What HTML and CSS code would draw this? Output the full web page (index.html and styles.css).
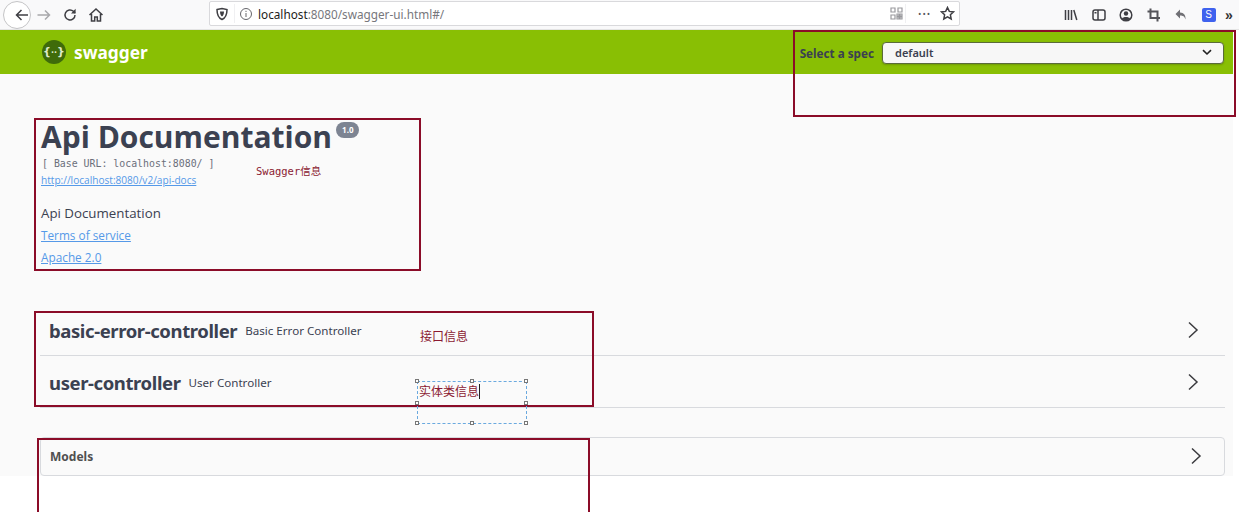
FILE: index.html
```html
<!DOCTYPE html>
<html lang="en">
<head>
<meta charset="utf-8">
<title>Swagger UI</title>
<link rel="stylesheet" href="styles.css">
</head>
<body>
<div class="page">
  <header class="browser">
    <div class="nav">
      <span class="back"><svg width="18" height="18" viewBox="0 0 18 18"><path d="M15 9H3.500M8.500 4 3.500 9l5 5" class="ic"/></svg></span>
      <svg class="fwd" width="16" height="16" viewBox="0 0 16 16"><path d="M1.500 8h12M9 3.500 13.500 8 9 12.500" class="ic-dim"/></svg>
      <svg width="16" height="16" viewBox="0 0 16 16"><path d="M13 8a5 5 0 1 1-1.600-3.700L13 6" class="ic"/><path d="M13.600 1.800v4.600H9z" class="ic-fill"/></svg>
      <svg width="16" height="16" viewBox="0 0 16 16"><path d="M1.500 8 8 2l6.500 6M3.500 7v7h3.200v-4h2.600v4h3.200V7" class="ic"/></svg>
    </div>
    <div class="urlbar">
      <svg width="14" height="14" viewBox="0 0 14 14"><path d="M2 2.500 7 1.500l5 1c0 5-1.500 8.500-5 10-3.500-1.500-5-5-5-10z" class="ic"/><path d="M5 4.500h4c0 2.500-.7 4-2 5-1.300-1-2-2.500-2-5z" class="ic-fill"/></svg>
      <span class="sep"></span>
      <svg width="14" height="14" viewBox="0 0 14 14"><circle cx="7" cy="7" r="5.500" class="ic-thin"/><path d="M7 6v4M7 3.800v1.200" class="ic-thin"/></svg>
      <span class="url"><b>localhost</b>:8080/swagger-ui.html#/</span>
      <span class="grow"></span>
      <svg class="qr" width="13" height="13" viewBox="0 0 13 13"><path d="M1 1h4v4H1zM8 1h4v4H8zM1 8h4v4H1zM7 7h2v2H7zM10 7h2v2h-2zM7 10h2v2H7zM10 10h2v2h-2z" class="ic-qr"/></svg>
      <span class="sep tall"></span>
      <span class="dots">•••</span>
      <svg width="15" height="15" viewBox="0 0 15 15"><path d="M7.500 1.500 9.300 5.400l4.200.5-3.100 2.900.8 4.200-3.700-2.100L3.800 13l.8-4.200L1.500 5.900l4.200-.5z" class="ic"/></svg>
    </div>
    <div class="tools">
      <svg width="14" height="14" viewBox="0 0 14 14"><path d="M1.500 2v10M4.500 2v10M7.500 2v10M9.800 2l3 10" class="ic"/></svg>
      <svg width="14" height="14" viewBox="0 0 14 14"><rect x="1" y="2" width="12" height="10" rx="2" class="ic"/><path d="M6 2v10" class="ic"/><path d="M2.500 4h2v1.500h-2z" class="ic-fill"/></svg>
      <svg width="14" height="14" viewBox="0 0 14 14"><circle cx="7" cy="7" r="5.800" class="ic"/><circle cx="7" cy="5.500" r="2.200" class="ic-fill"/><path d="M3 10.500c1-2 7-2 8 0-1 2-7 2-8 0z" class="ic-fill"/></svg>
      <svg width="14" height="14" viewBox="0 0 14 14"><path d="M3.500 0.500v9.500h9.500M0.500 3.500h10v10" class="ic-crop"/></svg>
      <svg width="14" height="14" viewBox="0 0 14 14"><path d="M6 1.500 1.500 6 6 10.500V7.500c3 0 4.500.8 5.500 4 .4-4-1.500-7-5.500-7z" class="ic-back"/></svg>
      <span class="s-badge">S</span>
      <span class="more">»</span>
    </div>
  </header>

  <main class="swagger">
    <div class="topbar">
      <div class="logo">
        <span class="logo-mark">{<i>··</i>}</span>
        <span class="logo-text">swagger</span>
      </div>
      <div class="spec">
        <label class="spec-label">Select a spec</label>
        <div class="spec-select">
          <span>default</span>
          <svg width="10" height="7" viewBox="0 0 10 7"><path d="M1 1.200 5 5l4-3.800" class="ic-sel"/></svg>
        </div>
      </div>
    </div>

    <section class="info">
      <h1 class="title">Api Documentation<span class="version">1.0</span></h1>
      <div class="base">[ Base URL: localhost:8080/ ]</div>
      <a class="docs" href="#">http://localhost:8080/v2/api-docs</a>
      <p class="desc">Api Documentation</p>
      <a class="link" href="#">Terms of service</a>
      <a class="link" href="#">Apache 2.0</a>
    </section>

    <section class="tags">
      <div class="tag">
        <h4 class="tag-name">basic-error-controller</h4>
        <span class="tag-desc">Basic Error Controller</span>
        <svg class="chev" width="12" height="18" viewBox="0 0 12 18"><path d="M2 1.500 10 9l-8 7.500" class="ic-chev"/></svg>
      </div>
      <div class="tag">
        <h4 class="tag-name">user-controller</h4>
        <span class="tag-desc">User Controller</span>
        <svg class="chev" width="12" height="18" viewBox="0 0 12 18"><path d="M2 1.500 10 9l-8 7.500" class="ic-chev"/></svg>
      </div>
    </section>

    <section class="models">
      <h4 class="models-title">Models</h4>
      <svg class="chev" width="12" height="18" viewBox="0 0 12 18"><path d="M2 1.500 10 9l-8 7.500" class="ic-chev"/></svg>
    </section>
  </main>

  <div class="mark box-spec"></div>
  <div class="mark box-info"></div>
  <div class="mark box-tags"></div>
  <div class="mark box-models"></div>
  <span class="note note-swagger">Swagger信息</span>
  <span class="note note-api">接口信息</span>
  <div class="textbox">
    <span class="note-inner">实体类信息</span><span class="caret"></span>
    <i class="h h1"></i><i class="h h2"></i><i class="h h3"></i><i class="h h4"></i><i class="h h5"></i><i class="h h6"></i><i class="h h7"></i><i class="h h8"></i>
  </div>
</div>
</body>
</html>
```

FILE: styles.css
```css
* { box-sizing: border-box; }
html, body { margin: 0; padding: 0; background: #fff; }
.page { position: relative; width: 1239px; height: 512px; overflow: hidden; font-family: "Open Sans", sans-serif; color: #3b4151; }

svg { display: block; flex: none; }
.ic { fill: none; stroke: #3f3f44; stroke-width: 1.500; }
.ic-dim { fill: none; stroke: #a8a8ab; stroke-width: 1.500; }
.ic-thin { fill: none; stroke: #66666b; stroke-width: 1; }
.ic-fill { fill: #3f3f44; }
.ic-qr { fill: none; stroke: #9a9a9e; stroke-width: 1.200; }
.ic-crop { fill: none; stroke: #55555a; stroke-width: 2; }
.ic-back { fill: #707075; }
.ic-sel { fill: none; stroke: #222; stroke-width: 1.600; }
.ic-chev { fill: none; stroke: #3a3a3e; stroke-width: 1.500; }

.browser { height: 30px; background: #f9f9fa; border-bottom: 1px solid #e4e4e4; display: flex; align-items: center; }
.nav { width: 209px; display: flex; align-items: center; padding-left: 3px; }
.back { width: 28px; height: 28px; border: 1px solid #c4c4c6; border-radius: 50%; background: #fff; display: flex; align-items: center; justify-content: center; margin-right: 5px; }
.fwd { margin-right: 10px; }
.nav svg:last-child { margin-left: 10px; }
.urlbar { width: 751px; height: 25px; margin-top: -2px; background: #fff; border: 1px solid #d9d9dc; border-radius: 2px; display: flex; align-items: center; padding: 0 4px 0 5px; }
.sep { width: 1px; height: 19px; background: #f0f0f2; margin: 0 4px 0 5px; }
.sep.tall { margin: 0 12px 0 2px; }
.url { font-size: 11.750px; color: #77777c; margin-left: 5px; white-space: nowrap; font-family: "Noto Sans", sans-serif; }
.url b { font-weight: 400; color: #1c1c20; }
.grow { flex: 1; }
.dots { font-size: 9px; letter-spacing: 1px; color: #55555a; margin-right: 7px; width: 15px; white-space: nowrap; }
.tools { flex: 1; display: flex; align-items: center; gap: 13.500px; padding-left: 104px; }
.s-badge { width: 14px; height: 14px; background: #3f62ee; color: #fff; font: 10px/14px "Liberation Sans", sans-serif; text-align: center; border-radius: 2px; }
.more { font: 700 14px/14px "Liberation Sans", sans-serif; color: #333; margin-left: -4px; }

.swagger { width: 1233px; height: 446px; background: #fafafa; }

.topbar { height: 44px; background: #89bf04; display: flex; align-items: center; justify-content: space-between; padding: 1px 9px 0 42px; }
.logo { display: flex; align-items: center; gap: 8px; }
.logo-mark { width: 24px; height: 24px; border-radius: 50%; margin-top: -2px; background: #3f6b0a; color: #dfe9c8; font: 700 11px/23px "DejaVu Sans", sans-serif; text-align: center; white-space: nowrap; }
.logo-mark i { font-style: normal; font-size: 8px; }
.logo-text { color: #fff; font: 700 17.300px/24px "Noto Sans", sans-serif; }
.spec { display: flex; align-items: center; gap: 8px; }
.spec-label { font: 700 11.700px/16px "Noto Sans", sans-serif; color: #3b4151; white-space: nowrap; }
.spec-select { width: 342px; height: 22px; background: #f7f7f7; border: 1px solid #5a6b3a; border-radius: 4px; display: flex; align-items: center; justify-content: space-between; padding: 0 11px 0 12px; font: 600 11px/14px "Noto Sans", sans-serif; color: #3b4151; box-shadow: 0 1px 2px rgba(0,0,0,.2); }

.info { padding: 42px 0 0 41px; }
.title { margin: 0; font: 700 30px/41px "Open Sans", sans-serif; color: #3b4151; display: flex; }
.version { height: 16px; margin: 6px 0 0 4px; padding: 0 6px; background: #7d8492; color: #fff; border-radius: 8px; font: 700 8px/16px "Noto Sans", sans-serif; }
.base { font: 9.900px/14px "DejaVu Sans Mono", monospace; color: #6b6f7a; padding-left: 1px; }
.docs { display: block; font-size: 10.100px; line-height: 14px; margin-top: 2px; color: #5599e8; }
.desc { margin: 16px 0 0; font-size: 13.300px; line-height: 20px; color: #3b4151; }
.link { display: block; width: max-content; font-size: 11.800px; line-height: 16px; margin-top: 4px; color: #5599e8; }
.link + .link { margin-top: 6px; }

.tags { margin-top: 39px; }
.tag { height: 52px; margin-left: 40px; margin-right: 8px; padding: 2px 26px 0 9px; border-bottom: 1px solid #d8dade; display: flex; align-items: center; }
.tag-name { margin: 0; font: 700 18.500px/24px "Noto Sans", sans-serif; color: #3b4151; letter-spacing: -.4px; white-space: nowrap; }
.tag-desc { margin-left: 8px; font: 11.600px/16px "Noto Sans", sans-serif; color: #3b4151; flex: 1; }
.chev { margin-top: -2px; }

.models { height: 39px; margin: 29px 8px 0 40px; border: 1px solid #d8dade; border-radius: 4px; display: flex; align-items: center; justify-content: space-between; padding: 0 22px 0 9px; }
.models-title { margin: 0; font: 700 12px/16px "Noto Sans", sans-serif; color: #505050; }

.mark { position: absolute; border: 2px solid #8b0c28; pointer-events: none; }
.box-spec { left: 793px; top: 30px; width: 443px; height: 87px; }
.box-info { left: 34px; top: 118px; width: 387px; height: 153px; }
.box-tags { left: 34px; top: 311px; width: 560px; height: 96px; }
.box-models { left: 37px; top: 438px; width: 553px; height: 90px; }

.note { position: absolute; font: 10.500px/12px "DejaVu Sans Mono", "Noto Sans CJK SC", monospace; color: #8b1a32; white-space: nowrap; }
.note-swagger { left: 256px; top: 165px; }
.note-api { left: 420px; top: 329px; font: 12px/14px "Noto Sans CJK SC", sans-serif; }
.textbox { position: absolute; left: 417px; top: 381px; width: 110px; height: 43px; border: 1px dashed #6aa9df; padding: 2px 0 0 1px; display: flex; align-items: flex-start; }
.note-inner { font: 12px/14px "Noto Sans CJK SC", sans-serif; color: #8b1a32; }
.caret { width: 1px; height: 15px; background: #222; }
.h { position: absolute; width: 4px; height: 4px; background: #fff; border: 1px solid #777; }
.h1 { left: -3px; top: -3px; }
.h2 { left: 52px; top: -3px; }
.h3 { left: 106px; top: -3px; }
.h4 { left: -3px; top: 19px; }
.h5 { left: 106px; top: 19px; }
.h6 { left: -3px; top: 39px; }
.h7 { left: 52px; top: 39px; }
.h8 { left: 106px; top: 39px; }
```
